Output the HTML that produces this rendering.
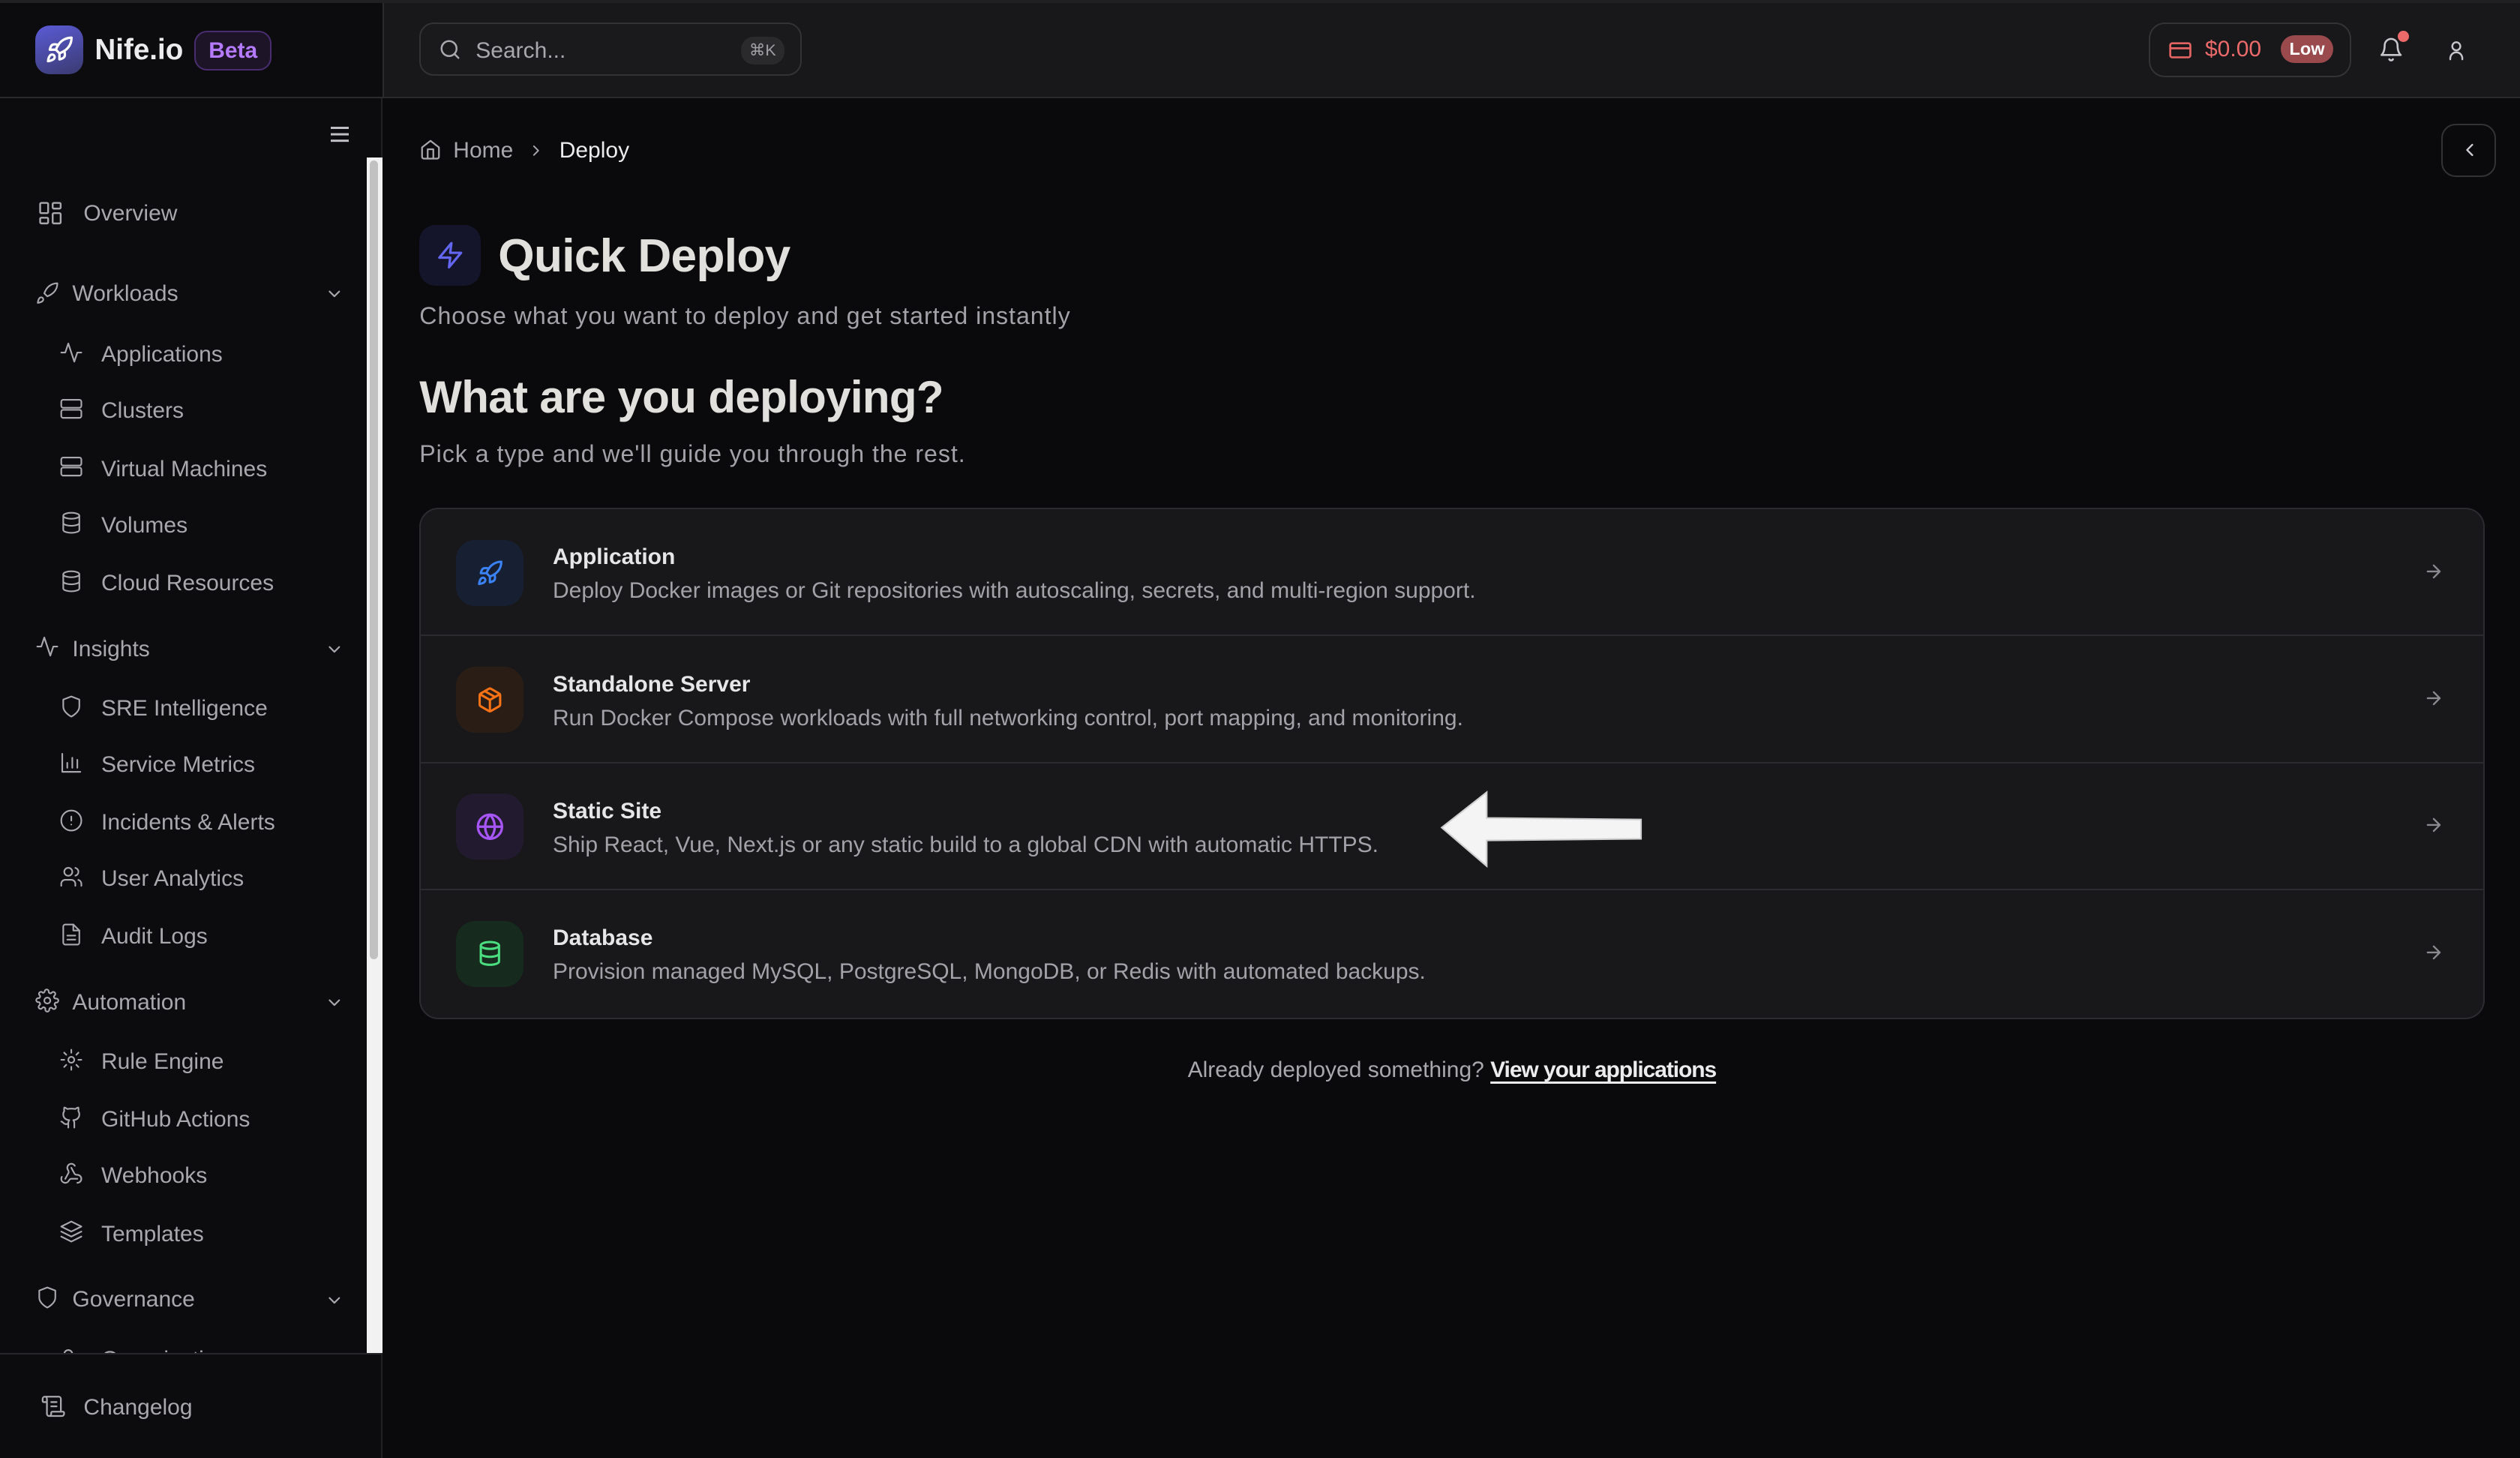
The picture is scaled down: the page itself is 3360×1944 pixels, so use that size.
<!DOCTYPE html>
<html><head><meta charset="utf-8"><style>
*{margin:0;padding:0;box-sizing:border-box}
html,body{width:3360px;height:1944px;overflow:hidden;background:#0a0a0c}
#root{zoom:2.142857;width:1568px;height:907.2px;position:relative;font-family:"Liberation Sans",sans-serif;color:#a8a8ad;background:#0a0a0c;overflow:hidden}
.a{position:absolute}
svg{display:block}
.ic{fill:none;stroke:currentColor;stroke-width:1.6;stroke-linecap:round;stroke-linejoin:round}
.si{position:absolute;font-size:14px;color:#a8a8ad;line-height:16px;transform:translateY(-7px);white-space:nowrap}
.row{position:absolute;left:0;width:1284px;height:79px;border-bottom:1px solid #2c2c30}
.row .ib{position:absolute;left:22px;top:19px;width:42px;height:41px;border-radius:12px;display:flex;align-items:center;justify-content:center}
.row .t{position:absolute;left:82px;top:22px;font-size:14px;font-weight:bold;color:#e6e6e8}
.row .d{position:absolute;left:82px;top:43px;font-size:14px;color:#a2a2a8}
.row .ar{position:absolute;left:1246px;top:32px;color:#8a8a90}
</style></head><body><div id="root">
<div class="a" style="left:0;top:0;width:238px;height:61px;background:#0c0c0e;border-bottom:1px solid #2a2a2d"></div>
<div class="a" style="left:238px;top:0;width:1330px;height:61px;background:#18181a;border-bottom:1px solid #2a2a2d;border-left:1px solid #2a2a2d"></div>
<div class="a" style="left:0;top:0;width:1568px;height:2px;background:#202022"></div>
<div class="a" style="left:0;top:61px;width:238px;height:847px;background:#0c0c0e;border-right:1px solid #222225"></div>
<div class="a" style="left:22px;top:16px;width:30px;height:30px;border-radius:9px;background:linear-gradient(160deg,#5b5bd6,#3a3a70);display:flex;align-items:center;justify-content:center;color:#fff">
<svg width="18" height="18" viewBox="0 0 24 24" class="ic" style="stroke-width:2"><path d="M4.5 16.5c-1.5 1.3-2 5-2 5s3.7-.5 5-2c.7-.8.7-2.1-.1-2.9a2.2 2.2 0 0 0-2.9-.1z"/><path d="M12 15l-3-3a22 22 0 0 1 2-4A13 13 0 0 1 22 2c0 2.7-.8 7.5-6 11a22 22 0 0 1-4 2z"/><path d="M9 12H4s.6-3 2-4c1.6-1.1 5 0 5 0M12 15v5s3-.6 4-2c1.1-1.6 0-5 0-5"/></svg></div>
<div class="a" style="left:59px;top:21px;font-size:18px;font-weight:bold;color:#ececee">Nife.io</div>
<div class="a" style="left:121px;top:19px;width:48px;height:25px;border-radius:8px;background:#1d1428;border:1px solid #4a2d70;color:#b57bff;font-size:14px;font-weight:bold;text-align:center;line-height:23px">Beta</div>
<div class="a" style="left:206px;top:79px;width:11px;height:1.5px;background:#c0c0c4;box-shadow:0 4px 0 #c0c0c4,0 8px 0 #c0c0c4"></div>
<div class="a" style="left:228px;top:98px;width:10px;height:745px;background:#f2f2f2"></div>
<div class="a" style="left:230px;top:100px;width:5px;height:497px;background:#c1c1c1;border-radius:3px"></div>

<div class="a" style="left:23px;top:124px;color:#a8a8ad"><svg width="17" height="17" viewBox="0 0 24 24" class="ic"><rect x="3" y="3" width="7" height="9" rx="1"/><rect x="14" y="3" width="7" height="5" rx="1"/><rect x="14" y="12" width="7" height="9" rx="1"/><rect x="3" y="16" width="7" height="5" rx="1"/></svg></div>
<div class="si" style="left:52px;top:132px">Overview</div>

<div class="a" style="left:22px;top:175px"><svg width="15" height="15" viewBox="0 0 24 24" class="ic"><path d="M4.5 16.5c-1.5 1.3-2 5-2 5s3.7-.5 5-2c.7-.8.7-2.1-.1-2.9a2.2 2.2 0 0 0-2.9-.1z"/><path d="M12 15l-3-3a22 22 0 0 1 2-4A13 13 0 0 1 22 2c0 2.7-.8 7.5-6 11a22 22 0 0 1-4 2z"/></svg></div>
<div class="si" style="left:45px;top:182px">Workloads</div>
<div class="a" style="left:202px;top:177px;color:#a8a8ad"><svg width="12" height="12" viewBox="0 0 24 24" class="ic" style="stroke-width:2"><path d="M6 9l6 6 6-6"/></svg></div>

<div class="a" style="left:37px;top:212px"><svg width="15" height="15" viewBox="0 0 24 24" class="ic"><path d="M22 12h-4l-3 9L9 3l-3 9H2"/></svg></div>
<div class="si" style="left:63px;top:220px">Applications</div>
<div class="a" style="left:37px;top:247px"><svg width="15" height="15" viewBox="0 0 24 24" class="ic"><rect x="2" y="3" width="20" height="8" rx="2"/><rect x="2" y="13" width="20" height="8" rx="2"/></svg></div>
<div class="si" style="left:63px;top:255px">Clusters</div>
<div class="a" style="left:37px;top:283px"><svg width="15" height="15" viewBox="0 0 24 24" class="ic"><rect x="2" y="3" width="20" height="8" rx="2"/><rect x="2" y="13" width="20" height="8" rx="2"/></svg></div>
<div class="si" style="left:63px;top:291px">Virtual Machines</div>
<div class="a" style="left:37px;top:318px"><svg width="15" height="15" viewBox="0 0 24 24" class="ic"><ellipse cx="12" cy="5" rx="8" ry="3"/><path d="M4 5v14c0 1.7 3.6 3 8 3s8-1.3 8-3V5M4 12c0 1.7 3.6 3 8 3s8-1.3 8-3"/></svg></div>
<div class="si" style="left:63px;top:326px">Volumes</div>
<div class="a" style="left:37px;top:354px"><svg width="15" height="15" viewBox="0 0 24 24" class="ic"><ellipse cx="12" cy="5" rx="8" ry="3"/><path d="M4 5v14c0 1.7 3.6 3 8 3s8-1.3 8-3V5M4 12c0 1.7 3.6 3 8 3s8-1.3 8-3"/></svg></div>
<div class="si" style="left:63px;top:362px">Cloud Resources</div>

<div class="a" style="left:22px;top:395px"><svg width="15" height="15" viewBox="0 0 24 24" class="ic"><path d="M22 12h-4l-3 9L9 3l-3 9H2"/></svg></div>
<div class="si" style="left:45px;top:403px">Insights</div>
<div class="a" style="left:202px;top:398px"><svg width="12" height="12" viewBox="0 0 24 24" class="ic" style="stroke-width:2"><path d="M6 9l6 6 6-6"/></svg></div>

<div class="a" style="left:37px;top:432px"><svg width="15" height="15" viewBox="0 0 24 24" class="ic"><path d="M12 22s8-4 8-10V5l-8-3-8 3v7c0 6 8 10 8 10z"/></svg></div>
<div class="si" style="left:63px;top:440px">SRE Intelligence</div>
<div class="a" style="left:37px;top:467px"><svg width="15" height="15" viewBox="0 0 24 24" class="ic"><path d="M3 3v18h18M8 17v-5M13 17V7M18 17v-8"/></svg></div>
<div class="si" style="left:63px;top:475px">Service Metrics</div>
<div class="a" style="left:37px;top:503px"><svg width="15" height="15" viewBox="0 0 24 24" class="ic"><circle cx="12" cy="12" r="10"/><path d="M12 8v4M12 16h.01"/></svg></div>
<div class="si" style="left:63px;top:511px">Incidents &amp; Alerts</div>
<div class="a" style="left:37px;top:538px"><svg width="15" height="15" viewBox="0 0 24 24" class="ic"><circle cx="9" cy="7" r="4"/><path d="M2 21v-2a4 4 0 0 1 4-4h6a4 4 0 0 1 4 4v2M16 3.1a4 4 0 0 1 0 7.8M22 21v-2a4 4 0 0 0-3-3.9"/></svg></div>
<div class="si" style="left:63px;top:546px">User Analytics</div>
<div class="a" style="left:37px;top:574px"><svg width="15" height="15" viewBox="0 0 24 24" class="ic"><path d="M14 2H6a2 2 0 0 0-2 2v16a2 2 0 0 0 2 2h12a2 2 0 0 0 2-2V8z"/><path d="M14 2v6h6M8 13h8M8 17h8"/></svg></div>
<div class="si" style="left:63px;top:582px">Audit Logs</div>

<div class="a" style="left:22px;top:615px"><svg width="15" height="15" viewBox="0 0 24 24" class="ic"><circle cx="12" cy="12" r="3"/><path d="M19.4 15a1.7 1.7 0 0 0 .3 1.8l.1.1a2 2 0 1 1-2.8 2.8l-.1-.1a1.7 1.7 0 0 0-2.9 1.2V21a2 2 0 1 1-4 0v-.1A1.7 1.7 0 0 0 7 19.4l-.1.1a2 2 0 1 1-2.8-2.8l.1-.1A1.7 1.7 0 0 0 3 13.6H3a2 2 0 1 1 0-4h.1A1.7 1.7 0 0 0 4.6 7l-.1-.1a2 2 0 1 1 2.8-2.8l.1.1A1.7 1.7 0 0 0 9.4 3V3a2 2 0 1 1 4 0v.1a1.7 1.7 0 0 0 2.9 1.2l.1-.1a2 2 0 1 1 2.8 2.8l-.1.1a1.7 1.7 0 0 0 1.2 2.9H21a2 2 0 1 1 0 4h-.1a1.7 1.7 0 0 0-1.5 1z"/></svg></div>
<div class="si" style="left:45px;top:623px">Automation</div>
<div class="a" style="left:202px;top:618px"><svg width="12" height="12" viewBox="0 0 24 24" class="ic" style="stroke-width:2"><path d="M6 9l6 6 6-6"/></svg></div>

<div class="a" style="left:37px;top:652px"><svg width="15" height="15" viewBox="0 0 24 24" class="ic"><circle cx="12" cy="12" r="3"/><path d="M12 2v3M12 19v3M4.9 4.9l2.1 2.1M17 17l2.1 2.1M2 12h3M19 12h3M4.9 19.1L7 17M17 7l2.1-2.1"/></svg></div>
<div class="si" style="left:63px;top:660px">Rule Engine</div>
<div class="a" style="left:37px;top:688px"><svg width="15" height="15" viewBox="0 0 24 24" class="ic"><path d="M15 22v-4a4.8 4.8 0 0 0-1-3.5c3 0 6-2 6-5.5.1-1.3-.3-2.5-1-3.5.3-1.2.3-2.4 0-3.5 0 0-1 0-3 1.5-2.6-.5-5.4-.5-8 0C6 2 5 2 5 2c-.3 1.1-.3 2.3 0 3.5A5.4 5.4 0 0 0 4 9c0 3.5 3 5.5 6 5.5-.4.5-.7 1.1-.8 1.700-.2.6-.3 1.2-.2 1.8v4M9 18c-4.5 2-5-2-7-2"/></svg></div>
<div class="si" style="left:63px;top:696px">GitHub Actions</div>
<div class="a" style="left:37px;top:723px"><svg width="15" height="15" viewBox="0 0 24 24" class="ic"><path d="M18 16.98h-5.99c-1.1 0-1.95.94-2.48 1.9A4 4 0 0 1 2 17c.01-.7.2-1.4.57-2M6 17l3.13-5.78c.53-.97.1-2.18-.5-3.1a4 4 0 1 1 6.89-4.06M12 6l3.13 5.73C15.660 12.7 16.9 13 18 13a4 4 0 0 1 0 8"/></svg></div>
<div class="si" style="left:63px;top:731px">Webhooks</div>
<div class="a" style="left:37px;top:759px"><svg width="15" height="15" viewBox="0 0 24 24" class="ic"><path d="M12 2L2 7l10 5 10-5-10-5zM2 17l10 5 10-5M2 12l10 5 10-5"/></svg></div>
<div class="si" style="left:63px;top:767px">Templates</div>

<div class="a" style="left:22px;top:800px"><svg width="15" height="15" viewBox="0 0 24 24" class="ic"><path d="M12 22s8-4 8-10V5l-8-3-8 3v7c0 6 8 10 8 10z"/></svg></div>
<div class="si" style="left:45px;top:808px">Governance</div>
<div class="a" style="left:202px;top:803px"><svg width="12" height="12" viewBox="0 0 24 24" class="ic" style="stroke-width:2"><path d="M6 9l6 6 6-6"/></svg></div>
<div class="si" style="left:63px;top:845px">Organizations</div>
<div class="a" style="left:37px;top:838px"><svg width="15" height="15" viewBox="0 0 24 24" class="ic"><circle cx="9" cy="7" r="4"/><path d="M2 21v-2a4 4 0 0 1 4-4h6"/></svg></div>

<div class="a" style="left:0;top:842px;width:238px;height:66px;background:#0c0c0e;border-top:1px solid #26262a;border-right:1px solid #222225"></div>
<div class="a" style="left:25px;top:867px"><svg width="16" height="16" viewBox="0 0 24 24" class="ic"><path d="M15 12h-5M15 8h-5M19 17V5a2 2 0 0 0-2-2H4M8 21h12a2 2 0 0 0 2-2v-1a1 1 0 0 0-1-1H11a1 1 0 0 0-1 1v1a2 2 0 1 1-4 0V5a2 2 0 1 0-4 0v2a1 1 0 0 0 1 1h3"/></svg></div>
<div class="si" style="left:52px;top:875px">Changelog</div>

<div class="a" style="left:261px;top:14px;width:238px;height:33px;border:1px solid #333336;border-radius:9px;background:#1a1a1c"></div>
<div class="a" style="left:273px;top:24px;color:#a8a8ad"><svg width="14" height="14" viewBox="0 0 24 24" class="ic" style="stroke-width:2"><circle cx="11" cy="11" r="8"/><path d="M21 21l-4.3-4.3"/></svg></div>
<div class="a" style="left:296px;top:24px;font-size:14px;color:#a8a8ad">Search...</div>
<div class="a" style="left:461px;top:23px;width:27px;height:17px;border-radius:8px;background:#2a2a2d;color:#a0a0a4;font-size:10px;text-align:center;line-height:17px">⌘K</div>

<div class="a" style="left:1337px;top:14px;width:126px;height:34px;border:1px solid #333336;border-radius:10px"></div>
<div class="a" style="left:1349px;top:24px;color:#e46464"><svg width="15" height="15" viewBox="0 0 24 24" class="ic" style="stroke-width:2"><rect x="2" y="5" width="20" height="14" rx="2"/><path d="M2 10h20"/></svg></div>
<div class="a" style="left:1372px;top:23px;font-size:14px;color:#ec6a6a">$0.00</div>
<div class="a" style="left:1419px;top:22px;width:33px;height:17px;border-radius:9px;background:#9a4a4c;color:#fff;font-size:11px;font-weight:bold;text-align:center;line-height:17px">Low</div>
<div class="a" style="left:1480px;top:23px;color:#c8c8cc"><svg width="16" height="16" viewBox="0 0 24 24" class="ic" style="stroke-width:1.8"><path d="M6 8a6 6 0 0 1 12 0c0 7 3 9 3 9H3s3-2 3-9M10.3 21a1.9 1.9 0 0 0 3.4 0"/></svg></div>
<div class="a" style="left:1492px;top:19px;width:7px;height:7px;border-radius:50%;background:#ec6a6a"></div>
<div class="a" style="left:1521px;top:24px;color:#c8c8cc"><svg width="15" height="15" viewBox="0 0 24 24" class="ic" style="stroke-width:1.8"><circle cx="12" cy="8" r="4"/><path d="M6 21v-1a6 6 0 0 1 12 0v1"/></svg></div>

<div class="a" style="left:1519px;top:77px;width:34px;height:33px;border:1px solid #333336;border-radius:9px"></div>
<div class="a" style="left:1530px;top:87px;color:#d0d0d4"><svg width="13" height="13" viewBox="0 0 24 24" class="ic" style="stroke-width:2"><path d="M15 18l-6-6 6-6"/></svg></div>

<div class="a" style="left:261px;top:86px;color:#a8a8ad"><svg width="14" height="14" viewBox="0 0 24 24" class="ic" style="stroke-width:1.8"><path d="M3 10l9-7 9 7v10a2 2 0 0 1-2 2H5a2 2 0 0 1-2-2z"/><path d="M9 22V12h6v10"/></svg></div>
<div class="a" style="left:282px;top:86px;font-size:14px;color:#a8a8ad">Home</div>
<div class="a" style="left:328px;top:88px;color:#a8a8ad"><svg width="11" height="11" viewBox="0 0 24 24" class="ic" style="stroke-width:2"><path d="M9 18l6-6-6-6"/></svg></div>
<div class="a" style="left:348px;top:86px;font-size:14px;color:#ececee">Deploy</div>

<div class="a" style="left:261px;top:140px;width:38px;height:38px;border-radius:10px;background:#14142a;display:flex;align-items:center;justify-content:center;color:#6366f1"><svg width="18" height="18" viewBox="0 0 24 24" class="ic" style="stroke-width:2"><path d="M13 2L3 14h9l-1 8 10-12h-9z"/></svg></div>
<div class="a" style="left:310px;top:143px;font-size:29px;font-weight:bold;color:#e2e0dc;letter-spacing:-0.3px">Quick Deploy</div>
<div class="a" style="left:261px;top:188px;font-size:15px;color:#a2a2a8;letter-spacing:0.45px">Choose what you want to deploy and get started instantly</div>
<div class="a" style="left:261px;top:231px;font-size:28px;font-weight:bold;color:#e2e0dc;letter-spacing:-0.3px">What are you deploying?</div>
<div class="a" style="left:261px;top:274px;font-size:15px;color:#a2a2a8;letter-spacing:0.45px">Pick a type and we'll guide you through the rest.</div>

<div class="a" style="left:261px;top:316px;width:1285px;height:318px;background:#18181b;border:1px solid #2c2c30;border-radius:12px;overflow:hidden">
 <div class="row" style="top:0">
  <div class="ib" style="background:#172033;color:#3b82f6"><svg width="17" height="17" viewBox="0 0 24 24" class="ic" style="stroke-width:2"><path d="M4.5 16.5c-1.5 1.3-2 5-2 5s3.7-.5 5-2c.7-.8.7-2.1-.1-2.9a2.2 2.2 0 0 0-2.9-.1z"/><path d="M12 15l-3-3a22 22 0 0 1 2-4A13 13 0 0 1 22 2c0 2.7-.8 7.5-6 11a22 22 0 0 1-4 2z"/><path d="M9 12H4s.6-3 2-4c1.6-1.1 5 0 5 0M12 15v5s3-.6 4-2c1.1-1.6 0-5 0-5"/></svg></div>
  <div class="t">Application</div><div class="d">Deploy Docker images or Git repositories with autoscaling, secrets, and multi-region support.</div>
  <div class="ar"><svg width="13" height="13" viewBox="0 0 24 24" class="ic" style="stroke-width:2"><path d="M5 12h14M12 5l7 7-7 7"/></svg></div>
 </div>
 <div class="row" style="top:79px">
  <div class="ib" style="background:#2a1d16;color:#f97316"><svg width="17" height="17" viewBox="0 0 24 24" class="ic" style="stroke-width:2"><path d="M21 8a2 2 0 0 0-1-1.7l-7-4a2 2 0 0 0-2 0l-7 4A2 2 0 0 0 3 8v8a2 2 0 0 0 1 1.7l7 4a2 2 0 0 0 2 0l7-4a2 2 0 0 0 1-1.7z"/><path d="M3.3 7L12 12l8.7-5M12 22V12M7.5 4.3l9 5.1"/></svg></div>
  <div class="t">Standalone Server</div><div class="d">Run Docker Compose workloads with full networking control, port mapping, and monitoring.</div>
  <div class="ar"><svg width="13" height="13" viewBox="0 0 24 24" class="ic" style="stroke-width:2"><path d="M5 12h14M12 5l7 7-7 7"/></svg></div>
 </div>
 <div class="row" style="top:158px">
  <div class="ib" style="background:#221b30;color:#a855f7"><svg width="18" height="18" viewBox="0 0 24 24" class="ic" style="stroke-width:2"><circle cx="12" cy="12" r="10"/><path d="M2 12h20M12 2a15 15 0 0 1 4 10 15 15 0 0 1-4 10 15 15 0 0 1-4-10 15 15 0 0 1 4-10z"/></svg></div>
  <div class="t">Static Site</div><div class="d">Ship React, Vue, Next.js or any static build to a global CDN with automatic HTTPS.</div>
  <div class="ar"><svg width="13" height="13" viewBox="0 0 24 24" class="ic" style="stroke-width:2"><path d="M5 12h14M12 5l7 7-7 7"/></svg></div>
 </div>
 <div class="row" style="top:237px;border-bottom:none">
  <div class="ib" style="background:#172a1e;color:#4ade80"><svg width="17" height="17" viewBox="0 0 24 24" class="ic" style="stroke-width:2"><ellipse cx="12" cy="5" rx="8" ry="3"/><path d="M4 5v14c0 1.7 3.6 3 8 3s8-1.3 8-3V5M4 12c0 1.7 3.6 3 8 3s8-1.3 8-3"/></svg></div>
  <div class="t">Database</div><div class="d">Provision managed MySQL, PostgreSQL, MongoDB, or Redis with automated backups.</div>
  <div class="ar"><svg width="13" height="13" viewBox="0 0 24 24" class="ic" style="stroke-width:2"><path d="M5 12h14M12 5l7 7-7 7"/></svg></div>
 </div>
</div>

<svg class="a" style="left:895px;top:491px" width="130" height="50" viewBox="0 0 130 50"><path d="M2 24 L30 2 L30 18 L126 19 L126 31 L30 32 L30 48 Z" fill="#f4f4f4" stroke="#cfcfcf" stroke-width="1"/></svg>

<div class="a" style="left:739px;top:658px;font-size:14px;color:#a8a8ad;white-space:nowrap">Already deployed something? <span style="color:#ececee;font-weight:bold;text-decoration:underline;text-underline-offset:3px;letter-spacing:-0.5px">View your applications</span></div>
</div></body></html>
